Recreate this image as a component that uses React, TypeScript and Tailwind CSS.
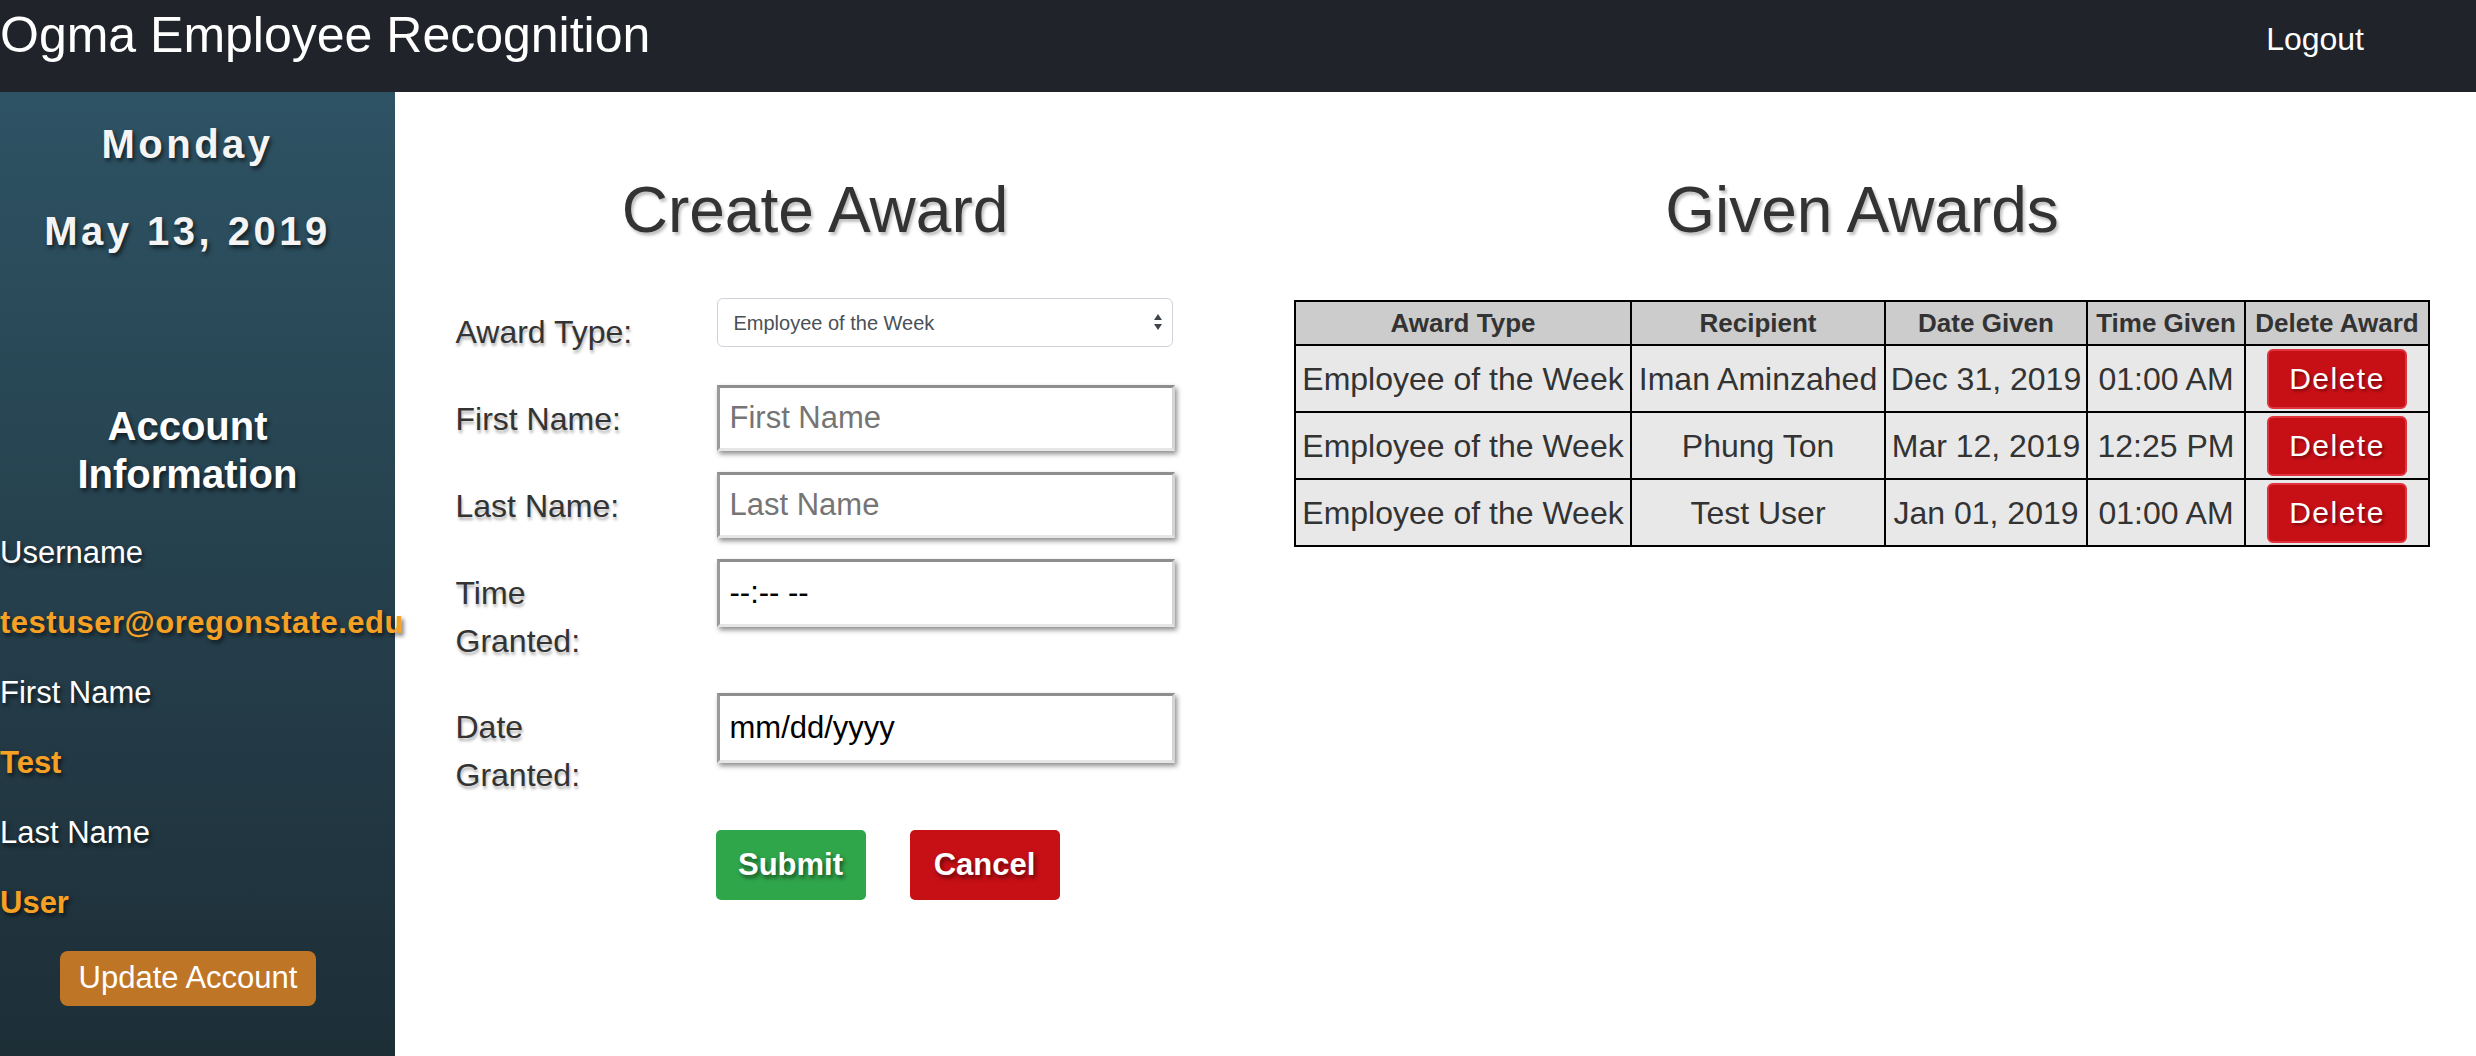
import React from 'react';

const awards = [
    { id: 1, type: 'Employee of the Week', recipient: 'Iman Aminzahed', date: 'Dec 31, 2019', time: '01:00 AM' },
    { id: 2, type: 'Employee of the Week', recipient: 'Phung Ton', date: 'Mar 12, 2019', time: '12:25 PM' },
    { id: 3, type: 'Employee of the Week', recipient: 'Test User', date: 'Jan 01, 2019', time: '01:00 AM' },
];

const inputCls =
    "w-[458px] h-[66px] bg-white border-[3px] border-solid border-t-[#8e8e8e] border-l-[#9a9a9a] border-r-[#d4d4d4] border-b-[#e6e6e6] shadow-[2px_3px_5px_rgba(0,0,0,0.45)] px-[10px] text-[31px] text-black outline-none placeholder:text-[#757575]";

const labelCls = "w-[261px] shrink-0 mt-[10px] text-[32px] leading-[48px] text-[#333] [text-shadow:1px_3px_3px_rgba(0,0,0,0.3)]";

export default function App() {
    return (
        <div className="min-h-screen flex flex-col font-['Liberation_Sans',Arial,sans-serif]">
            {/* Top bar */}
            <header className="h-[92px] shrink-0 bg-[#202329] text-white flex justify-between pr-[112px]">
                <span className="text-[50px] leading-[50px] pt-[10px]">Ogma Employee Recognition</span>
                <a href="#" className="text-[32px] leading-[32px] mt-[23px]">Logout</a>
            </header>

            <div className="flex flex-1">
                {/* Sidebar */}
                <aside className="w-[395px] shrink-0 bg-linear-to-b from-[#2e5364] to-[#1d2e37] text-white pt-[28px] pr-[20px] [text-shadow:2px_3px_4px_rgba(0,0,0,0.6)]">
                    <div className="text-center font-bold text-[40px] leading-[48px] tracking-[3.5px] text-[#f4f4f4]">Monday</div>
                    <div className="text-center font-bold text-[40px] leading-[48px] tracking-[3.5px] text-[#f4f4f4] mt-[39px]">May 13, 2019</div>
                    <h2 className="text-center font-bold text-[40px] leading-[48px] mt-[147px]">
                        Account<br />Information
                    </h2>
                    <div className="flex flex-col gap-[30px] mt-[35px] text-[31px] leading-[40px] whitespace-nowrap">
                        <div>Username</div>
                        <div className="font-bold text-[#f6a124] tracking-[0.5px]">testuser@oregonstate.edu</div>
                        <div>First Name</div>
                        <div className="font-bold text-[#f6a124]">Test</div>
                        <div>Last Name</div>
                        <div className="font-bold text-[#f6a124]">User</div>
                    </div>
                    <button className="ml-[60px] mt-[28px] w-[256px] h-[55px] rounded-[8px] bg-[#bf7526] text-white text-[31px] [text-shadow:none]">
                        Update Account
                    </button>
                </aside>

                {/* Main */}
                <main className="flex-1 grid grid-cols-[840px_1fr] items-start">
                    {/* Create award */}
                    <section>
                        <h1 className="mt-[80px] text-center text-[64px] leading-[77px] text-[#333] [text-shadow:2px_3px_3px_rgba(0,0,0,0.25)]">Create Award</h1>
                        <form className="w-[719px] mx-auto mt-[49px]" onSubmit={e => e.preventDefault()}>
                            <div className="flex items-start mb-[29px]">
                                <label className={labelCls}>Award Type:</label>
                                <div className="relative">
                                    <select className="appearance-none w-[456px] h-[49px] border border-[#ced4da] rounded-[6px] bg-white pl-[16px] text-[20px] text-[#495057] outline-none">
                                        <option>Employee of the Week</option>
                                        <option>Employee of the Month</option>
                                    </select>
                                    <svg className="absolute right-[10px] top-[15px]" width="10" height="18" viewBox="0 0 10 18">
                                        <path d="M5 1 L9 7 H1 Z" fill="#3f444a" />
                                        <path d="M5 17 L9 11 H1 Z" fill="#3f444a" />
                                    </svg>
                                </div>
                            </div>
                            <div className="flex items-start mb-[21px]">
                                <label className={labelCls}>First Name:</label>
                                <input type="text" placeholder="First Name" className={inputCls} />
                            </div>
                            <div className="flex items-start mb-[21px]">
                                <label className={labelCls}>Last Name:</label>
                                <input type="text" placeholder="Last Name" className={inputCls} />
                            </div>
                            <div className="flex items-start mb-[28px]">
                                <label className={labelCls}>Time<br />Granted:</label>
                                <input type="text" placeholder="--:-- --" className={inputCls + " h-[68px] text-[28px] placeholder:text-black"} />
                            </div>
                            <div className="flex items-start mb-[31px]">
                                <label className={labelCls}>Date<br />Granted:</label>
                                <input type="text" placeholder="mm/dd/yyyy" className={inputCls + " h-[70px] placeholder:text-black"} />
                            </div>
                            <div className="flex gap-[44px] pl-[260px]">
                                <button type="submit" className="w-[150px] h-[70px] rounded-[5px] bg-[#30a64b] text-white font-bold text-[31px] [text-shadow:2px_3px_4px_rgba(0,0,0,0.5)]">
                                    Submit
                                </button>
                                <button type="button" className="w-[150px] h-[70px] rounded-[5px] bg-[#c70f16] text-white font-bold text-[31px] [text-shadow:2px_3px_4px_rgba(0,0,0,0.5)]">
                                    Cancel
                                </button>
                            </div>
                        </form>
                    </section>

                    {/* Given awards */}
                    <section className="pl-[13px]">
                        <h1 className="mt-[80px] text-center text-[64px] leading-[77px] text-[#333] [text-shadow:2px_3px_3px_rgba(0,0,0,0.25)]">Given Awards</h1>
                        <table className="mt-[51px] mx-auto w-[1134px] table-fixed border-collapse border-2 border-black text-[#333]">
                            <thead>
                                <tr className="bg-[#cccccc]">
                                    <th className="w-[336px] h-[44px] border-2 border-black text-[26px] font-bold">Award Type</th>
                                    <th className="w-[254px] border-2 border-black text-[26px] font-bold">Recipient</th>
                                    <th className="w-[202px] border-2 border-black text-[26px] font-bold">Date Given</th>
                                    <th className="w-[158px] border-2 border-black text-[26px] font-bold whitespace-nowrap">Time Given</th>
                                    <th className="w-[184px] border-2 border-black text-[26px] font-bold whitespace-nowrap">Delete Award</th>
                                </tr>
                            </thead>
                            <tbody>
                                {awards.map(a => (
                                    <tr key={a.id} className="bg-[#e8e8e8] text-[32px]">
                                        <td className="h-[67px] border-2 border-black text-center whitespace-nowrap">{a.type}</td>
                                        <td className="border-2 border-black text-center whitespace-nowrap">{a.recipient}</td>
                                        <td className="border-2 border-black text-center whitespace-nowrap">{a.date}</td>
                                        <td className="border-2 border-black text-center whitespace-nowrap">{a.time}</td>
                                        <td className="border-2 border-black text-center">
                                            <button className="w-[140px] h-[60px] rounded-[6px] bg-[#c70f16] border-2 border-[#e0323c] text-white text-[30px] tracking-[1.5px] [text-shadow:2px_2px_3px_rgba(0,0,0,0.4)]">
                                                Delete
                                            </button>
                                        </td>
                                    </tr>
                                ))}
                            </tbody>
                        </table>
                    </section>
                </main>
            </div>
        </div>
    );
}
